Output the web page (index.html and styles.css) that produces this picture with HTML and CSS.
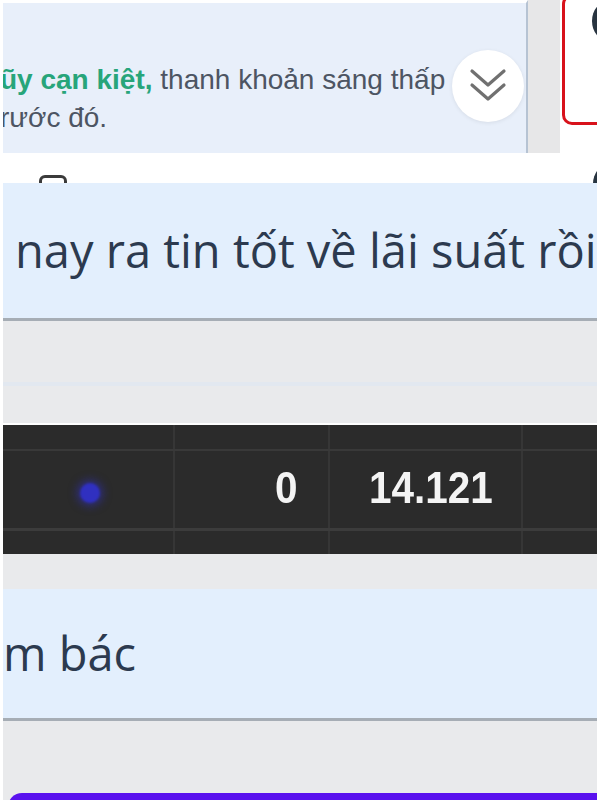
FILE: index.html
```html
<!DOCTYPE html>
<html lang="vi">
<head>
    <meta charset="UTF-8">
    <meta name="viewport" content="width=device-width, initial-scale=1.0">
    <title>Thảo luận</title>
    <link rel="stylesheet" href="styles.css">
</head>
<body>
    <div class="page">
        <div class="top-row">
            <div class="thread">
                <div class="post-row">
                    <div class="post">
                        <p class="post-text"><span class="tag">ũy cạn kiệt,</span> thanh khoản sáng thấp</p>
                        <p class="post-text">rước đó.</p>
                        <button class="scroll-btn" aria-label="Cuộn xuống">
                            <svg width="40" height="40" viewBox="0 0 40 40" fill="none" stroke="#707070" stroke-width="3.2" stroke-linecap="round" stroke-linejoin="round">
                                <polyline points="4,5 20,19 36,5"/>
                                <polyline points="4,19 20,33 36,19"/>
                            </svg>
                        </button>
                    </div>
                    <div class="gutter"></div>
                </div>
                <div class="composer">
                    <span class="composer-icon"></span>
                </div>
            </div>
            <div class="side">
                <div class="alert-box">
                    <span class="avatar"></span>
                </div>
                <span class="avatar avatar-low"></span>
            </div>
        </div>

        <div class="msg">
            <p class="msg-text">nay ra tin tốt về lãi suất rồi</p>
        </div>

        <div class="spacer">
            <div class="spacer-line"></div>
        </div>

        <div class="chart">
            <span class="dot"></span>
            <div class="chart-values">
                <span class="val val-zero">0</span>
                <span class="val val-main">14.121</span>
            </div>
        </div>

        <div class="gap"></div>

        <div class="msg">
            <p class="msg-text msg-short">m bác</p>
        </div>

        <div class="gap gap-last"></div>

        <div class="bottom-bar"></div>
    </div>
</body>
</html>
```

FILE: styles.css
```css
body {
    margin: 0;
    background-color: #e9eaec;
    font-family: "Open Sans", "Noto Sans", sans-serif;
    color: #2c3a4f;
}
.page {
    width: 600px;
    height: 800px;
    overflow: hidden;
    border-left: 3px solid #fff;
    border-right: 3px solid #fff;
    box-sizing: border-box;
    display: flex;
    flex-direction: column;
}
p {
    margin: 0;
}

/* top: post + side panel */
.top-row {
    display: flex;
    height: 183px;
    flex-shrink: 0;
    margin-left: -3px;
    margin-right: -3px;
}
.thread {
    width: 560px;
    display: flex;
    flex-direction: column;
}
.post-row {
    display: flex;
    height: 153px;
}
.post {
    position: relative;
    width: 528px;
    box-sizing: border-box;
    background-color: #e8effa;
    border-right: 2px solid #b6c3d3;
    border-top: 3px solid #fff;
    padding-top: 58px;
    overflow: hidden;
    font-family: "Liberation Sans", Arial, sans-serif;
    font-size: 28px;
    line-height: 38px;
    color: #4d5563;
}
.post-text {
    white-space: nowrap;
}
.tag {
    color: #27a57a;
    font-weight: bold;
}
.scroll-btn {
    position: absolute;
    left: 452px;
    top: 47px;
    width: 72px;
    height: 72px;
    border-radius: 50%;
    border: none;
    background-color: #fff;
    box-shadow: 0 1px 4px rgba(0,0,0,0.08);
    display: flex;
    align-items: center;
    justify-content: center;
    padding: 0;
}
.gutter {
    width: 32px;
    background-color: #e7e7e8;
}
.composer {
    height: 30px;
    background-color: #fff;
    position: relative;
    overflow: hidden;
}
.composer-icon {
    position: absolute;
    left: 39px;
    top: 22px;
    width: 22px;
    height: 14px;
    border: 3px solid #3b3b3b;
    border-radius: 6px;
}
.side {
    flex: 1;
    background-color: #fff;
    position: relative;
    overflow: hidden;
}
.alert-box {
    width: 60px;
    height: 131px;
    margin-top: -6px;
    margin-left: 2px;
    box-sizing: border-box;
    border: 3px solid #d8121b;
    border-radius: 10px;
    position: relative;
}
.avatar {
    position: absolute;
    left: 27px;
    top: 4px;
    width: 34px;
    height: 40px;
    border-radius: 50%;
    background-color: #283440;
}
.avatar-low {
    left: 33px;
    top: 164px;
}

/* chat bubbles */
.msg {
    flex-shrink: 0;
    background-color: #e3effd;
    border-bottom: 3px solid #a6adb5;
    overflow: hidden;
}
.msg-text {
    white-space: nowrap;
    font-size: 47px;
    line-height: 135px;
    padding-left: 12px;
    color: #2c3a4f;
}
.msg-short {
    line-height: 129px;
    padding-left: 0;
}

.spacer {
    height: 102px;
    flex-shrink: 0;
    position: relative;
}
.spacer-line {
    position: absolute;
    left: 0;
    right: 0;
    top: 61px;
    height: 4px;
    background-color: #e2e8f0;
}

/* chart strip */
.chart {
    position: relative;
    height: 129px;
    flex-shrink: 0;
    background-color: #2b2b2b;
    background-image:
        linear-gradient(to bottom, transparent 24px, #393939 24px, #393939 26px, transparent 26px),
        linear-gradient(to bottom, transparent 103px, #3c3c3c 103px, #3c3c3c 106px, transparent 106px),
        linear-gradient(to right, transparent 173px, #363636 173px, #363636 175px, transparent 175px),
        linear-gradient(to right, transparent 328px, #363636 328px, #363636 330px, transparent 330px),
        linear-gradient(to right, transparent 521px, #363636 521px, #363636 523px, transparent 523px);
    border-top: 2px solid #fff;
    margin-left: -3px;
    margin-right: -3px;
}
.dot {
    position: absolute;
    left: 80px;
    top: 58px;
    width: 20px;
    height: 20px;
    border-radius: 50%;
    background-color: #3030c0;
    box-shadow: 0 0 8px 3px rgba(48,48,192,0.55);
    filter: blur(1px);
}
.chart-values {
    display: flex;
    align-items: center;
    height: 100%;
    padding-bottom: 4px;
    box-sizing: border-box;
    font-family: "Liberation Sans", Arial, sans-serif;
    font-weight: bold;
    font-size: 44px;
    color: #f4f4f4;
}
.val {
    display: inline-block;
    transform: scaleX(0.92);
    transform-origin: left center;
}
.val-zero {
    margin-left: 275px;
}
.val-main {
    margin-left: 70px;
}

.gap {
    height: 35px;
    flex-shrink: 0;
}
.gap-last {
    height: 72px;
}
.bottom-bar {
    height: 20px;
    margin-left: 5px;
    margin-right: -3px;
    border-top-left-radius: 14px;
    background-color: #5a12ee;
    flex-shrink: 0;
}
```
